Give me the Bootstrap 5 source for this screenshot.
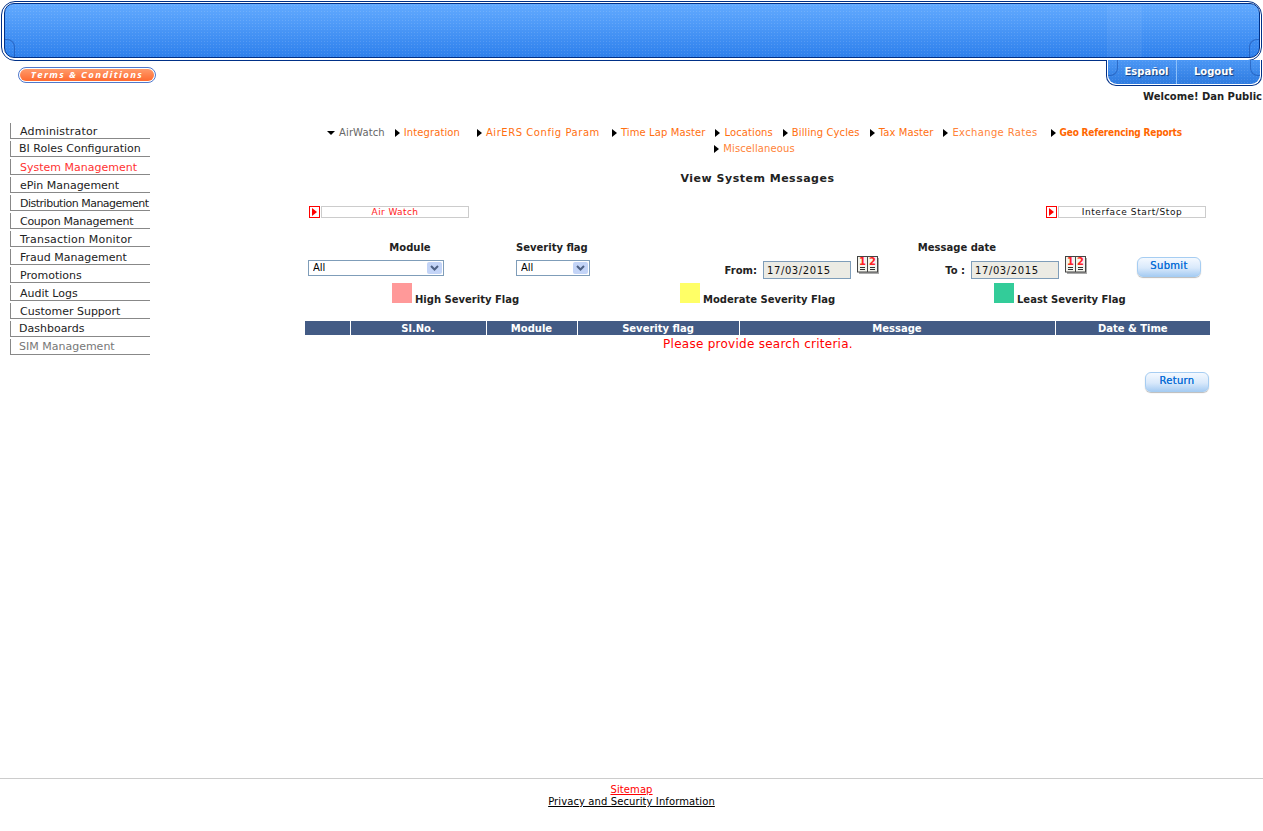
<!DOCTYPE html>
<html lang="en">
<head>
    <meta charset="UTF-8">
    <meta name="viewport" content="width=device-width, initial-scale=1.0">
    <title>View System Messages</title>
    <link rel="stylesheet" href="https://cdn.jsdelivr.net/npm/bootstrap@5.3.0/dist/css/bootstrap.min.css">
    <style>
        body { font-family: "DejaVu Sans", Verdana, sans-serif; font-size: 10px; line-height: 12px; color: #222; background: #fff; }
        a { text-decoration: none; }

        .banner-outer { margin: 1px 1px 0 1px; height: 60px; border: 1px solid #003087; border-radius: 14px; padding: 1px 1px 2px 2px; background: #fff; position: relative; z-index: 1; }
        .banner-inner { height: 100%; border: 1px solid #003087; border-radius: 10px; position: relative; overflow: hidden;
            background: radial-gradient(circle, rgba(255,255,255,.12) 1px, transparent 1px) 0 0 / 3px 3px, linear-gradient(#62aaff, #2e80ec); }
        .banner-inner::before, .banner-inner::after { content: ""; position: absolute; bottom: 0; width: 10px; height: 18px; border: 1px solid rgba(20,70,160,.5); border-bottom: 0; }
        .banner-inner::before { left: 0; border-left: 0; border-top-right-radius: 8px; }
        .banner-inner::after { right: 0; border-right: 0; border-top-left-radius: 8px; }
        .banner-mark { position: absolute; right: 117px; top: 2px; bottom: 0; width: 35px; background: rgba(255,255,255,.05); }

        .top-strip { height: 25px; margin-top: -1px; }
        .terms-btn { margin: 7px 0 0 18px; width: 138px; height: 16px; border: 1px solid #4f78cc; border-radius: 8px; background: #fff; padding: 1px; }
        .terms-btn span { display: block; height: 100%; border-radius: 6px; background: linear-gradient(#ff9a6a, #ff6a30); color: #fff; font-size: 9.5px; line-height: 12px; font-style: italic; font-weight: bold; letter-spacing: 1.4px; text-align: center; font-family: "Open Sans", sans-serif; }
        .lang-tabs { width: 156px; height: 26px; margin-right: 1px; border: 1px solid #003087; border-top: 0; border-radius: 0 0 10px 10px; padding: 0 1px 1px 1px; background: #fff; position: relative; z-index: 2; }
        .lang-tabs::before, .lang-tabs::after { content: ""; position: absolute; top: 0; width: 10px; height: 16px; border: 1px solid rgba(20,70,160,.5); border-top: 0; }
        .lang-tabs::before { left: 1px; border-left: 0; border-bottom-right-radius: 8px; }
        .lang-tabs::after { right: 1px; border-right: 0; border-bottom-left-radius: 8px; }
        .lang-tabs a { display: block; text-align: center; color: #fff; font-weight: bold; font-size: 10px; line-height: 21px; padding-top: 1px; text-shadow: 1px 1px 1px #123a78;
            background: radial-gradient(circle, rgba(255,255,255,.1) 1px, transparent 1px) 0 0 / 3px 3px, linear-gradient(#4b97f5, #2e7be0); }
        .lang-tabs a:first-child { flex: none; width: 69px; padding-left: 9px; border-right: 1px solid #8cc0fa; border-radius: 0 0 0 9px; }
        .lang-tabs a:last-child { flex: 1; padding-right: 10px; border-radius: 0 0 9px 0; }
        .welcome { margin-top: 6px; height: 12px; font-weight: bold; font-size: 10px; text-align: right; padding-right: 1px; white-space: nowrap; }

        .side-menu { width: 140px; margin: 18px 0 0 10px; flex: none; }
        .side-menu a { display: block; height: 16px; margin-top: 2px; border-left: 1px solid #888; border-bottom: 1px solid #888; padding: 2px 0 0 9px; color: #222; font-size: 11px; line-height: 14px; white-space: nowrap; overflow: hidden; }
        .side-menu a.on { color: #f33; }
        .side-menu a.off { color: #777; }
        .side-menu a.up { padding-top: 1px; padding-left: 8px; }
        .side-menu a.tight { letter-spacing: -.28px; }
        .side-menu a.tighter { letter-spacing: -.5px; }
        .side-menu a.roomy { letter-spacing: .2px; }

        .main-area { width: 905px; margin: 24px 0 0 155px; flex: none; }
        .sub-nav { column-gap: 10px; row-gap: 4px; height: 28px; padding-left: 16px; padding-right: 22px; }
        .sub-nav a { color: #ff6f10; font-size: 10px; line-height: 12px; display: flex; align-items: center; gap: 3px; white-space: nowrap; letter-spacing: .1px; }
        .sub-nav a.cur { color: #666; gap: 4px; }
        .sub-nav a.geo { color: #f60; font-weight: bold; font-family: "DejaVu Sans Condensed", "DejaVu Sans", sans-serif; font-stretch: condensed; letter-spacing: -.2px; }
        .sub-nav a.pale { color: #ff8338; }
        .sub-nav a.gap-after { margin-right: 7px; }
        .sub-nav a.ls-wide { letter-spacing: .55px; margin-right: 2px; }
        .sub-nav a.ls-mid { letter-spacing: .35px; margin-right: 3px; }
        .tri-r { width: 0; height: 0; border-left: 5px solid #000; border-top: 4px solid transparent; border-bottom: 4px solid transparent; margin-right: 1px; }
        .tri-d { width: 0; height: 0; border-top: 4px solid #000; border-left: 4px solid transparent; border-right: 4px solid transparent; }
        .page-title { font-weight: bold; font-size: 11px; text-align: center; margin: 17px 0 0 0; line-height: 14px; height: 14px; letter-spacing: .5px; }

        .tool-row { margin: 20px 0 0 4px; width: 897px; }
        .tool-item { width: 160px; height: 12px; }
        .red-box { width: 11px; height: 12px; border: 1px solid #f00; flex: none; position: relative; }
        .red-box::after { content: ""; position: absolute; left: 2px; top: 1px; border-left: 5px solid #f00; border-top: 4px solid transparent; border-bottom: 4px solid transparent; }
        .tool-label { flex: 1; margin-left: 1px; border: 1px solid #ccc; font-size: 9px; line-height: 10px; text-align: center; color: #111; letter-spacing: .6px; }
        .tool-label.red { color: #f22; letter-spacing: .4px; }

        .filter-grid { display: grid; grid-template-columns: 208px 141px 222px 208px 50px 64px; margin: 24px 0 0 3px; height: 41px; }
        .f-label { font-weight: bold; font-size: 10px; line-height: 12px; }
        .module-label { padding-right: 4px; }
        .date-label { padding-right: 52px; }
        .f-select { display: block; appearance: none; border: 1px solid #7f9db9; border-radius: 0; height: 16px; padding: 0 0 0 4px; font-family: "DejaVu Sans", sans-serif; font-size: 10px; line-height: 14px; color: #000; margin-top: 6px;
            background: #fff url("data:image/svg+xml,%3Csvg xmlns='http://www.w3.org/2000/svg' width='15' height='12'%3E%3Crect width='15' height='12' rx='2' fill='%23c3d4f7'/%3E%3Cpath d='M4 4l3.5 3.5L11 4' fill='none' stroke='%234d6185' stroke-width='2'/%3E%3C/svg%3E") no-repeat right 1px center; }
        .select-module { width: 136px; }
        .select-flag { width: 74px; }
        .date-pad { padding-top: 12px; }
        .date-word { font-size: 10px; line-height: 12px; margin-top: 11px; white-space: nowrap; }
        .date-box { width: 88px; height: 18px; border: 1px solid #7f9db9; background: #ecebe4; color: #111; font-family: "DejaVu Sans", sans-serif; font-size: 10px; line-height: 16px; padding: 0 3px; margin: 7px 0 0 6px; letter-spacing: .6px; border-radius: 0; }
        .cal-icon { margin: 2px 0 0 6px; flex: none; }
        .cal-digit { font-family: "DejaVu Sans", sans-serif; font-size: 10px; font-weight: bold; fill: #f22; }

        .blue-btn { display: block; width: 64px; height: 20px; padding: 0 0 3px 0; border: 1px solid #a6cdf2; border-radius: 6px; background: linear-gradient(#f4f9ff 0, #d9e9fb 55%, #a8cdf3 100%); color: #0f6fd6; font-size: 10px; line-height: 15px; font-weight: normal; box-shadow: 0 1px 1px #bbb; letter-spacing: .3px; text-shadow: 0 0 .5px #0f6fd6; }
        .submit-btn { margin-top: 15px; }
        .legend-row { height: 20px; padding-left: 87px; font-weight: bold; font-size: 10px; }
        .legend-item { display: flex; align-items: flex-end; gap: 3px; white-space: nowrap; line-height: 12px; }
        .legend-item span + span { margin-bottom: -3px; }
        .swatch { width: 20px; height: 20px; display: block; }
        .swatch-high { background: #ff9999; }
        .swatch-mid { background: #ffff66; }
        .swatch-low { background: #33cc99; }
        .legend-high { width: 288px; }
        .legend-mid { width: 314px; }

        .msg-table { width: 905px; margin: 18px 0 0 0; table-layout: fixed; border-collapse: collapse; }
        .msg-table th { background: #435b85; color: #fff; font-size: 10px; line-height: 13px; height: 14px; padding: 1px 0 0 0; text-align: center; border-left: 1px solid #fff; font-weight: bold; }
        .msg-table th:first-child { border-left: 0; }
        .msg-table td { color: #f00; font-size: 12px; line-height: 18px; padding: 0 0 0 1px; text-align: center; letter-spacing: .26px; }
        .c-a { width: 45px; } .c-b { width: 136px; } .c-c { width: 91px; } .c-d { width: 162px; } .c-e { width: 316px; } .c-f { width: 155px; }
        .return-row { margin-top: 19px; padding-right: 1px; }

        .foot-area { border-top: 1px solid #ccc; height: 53px; padding-top: 5px; text-align: center; font-size: 10px; line-height: 12px; letter-spacing: .1px; }
        .foot-area a { display: block; }
        .foot-area a span { text-decoration: underline; }
        .foot-area .red-link { color: #f00; }
        .foot-area .black-link { color: #000; }
    </style>
</head>
<body class="d-flex flex-column vh-100 overflow-hidden">

<div class="banner-outer">
    <div class="banner-inner"><div class="banner-mark"></div></div>
</div>

<div class="top-strip d-flex justify-content-between align-items-start">
    <div class="terms-btn"><span>Terms &amp; Conditions</span></div>
    <div class="lang-tabs d-flex">
        <a href="#">Español</a>
        <a href="#">Logout</a>
    </div>
</div>
<div class="welcome">Welcome! Dan Public</div>

<div class="d-flex align-items-start">
    <div class="side-menu">
        <a href="#" class="roomy">Administrator</a>
        <a href="#" class="up">BI Roles Configuration</a>
        <a href="#" class="on">System Management</a>
        <a href="#">ePin Management</a>
        <a href="#" class="tighter">Distribution Management</a>
        <a href="#" class="tight">Coupon Management</a>
        <a href="#" class="roomy">Transaction Monitor</a>
        <a href="#">Fraud Management</a>
        <a href="#">Promotions</a>
        <a href="#">Audit Logs</a>
        <a href="#">Customer Support</a>
        <a href="#" class="up">Dashboards</a>
        <a href="#" class="off up">SIM Management</a>
    </div>

    <div class="main-area">
        <div class="sub-nav d-flex flex-wrap justify-content-center">
            <a href="#" class="cur"><i class="tri-d"></i>AirWatch</a>
            <a href="#" class="gap-after"><i class="tri-r"></i>Integration</a>
            <a href="#" class="ls-wide"><i class="tri-r"></i>AirERS Config Param</a>
            <a href="#"><i class="tri-r"></i>Time Lap Master</a>
            <a href="#"><i class="tri-r"></i>Locations</a>
            <a href="#"><i class="tri-r"></i>Billing Cycles</a>
            <a href="#"><i class="tri-r"></i>Tax Master</a>
            <a href="#" class="pale ls-mid"><i class="tri-r"></i>Exchange Rates</a>
            <a href="#" class="geo"><i class="tri-r"></i>Geo Referencing Reports</a>
            <a href="#" class="pale"><i class="tri-r"></i>Miscellaneous</a>
        </div>

        <div class="page-title">View System Messages</div>

        <div class="tool-row d-flex justify-content-between">
            <div class="tool-item d-flex"><span class="red-box"></span><span class="tool-label red">Air Watch</span></div>
            <div class="tool-item d-flex"><span class="red-box"></span><span class="tool-label">Interface Start/Stop</span></div>
        </div>

        <div class="filter-grid">
            <div>
                <div class="f-label module-label text-center">Module</div>
                <select class="f-select select-module"><option>All</option></select>
            </div>
            <div>
                <div class="f-label">Severity flag</div>
                <select class="f-select select-flag"><option>All</option></select>
            </div>
            <div class="date-pad d-flex justify-content-end align-items-start">
                <b class="date-word">From:</b>
                <input class="date-box" value="17/03/2015">
                <svg class="cal-icon" width="22" height="18" viewBox="0 0 22 18"><rect x="2" y="2" width="20" height="16" fill="#aaa"/><rect x=".5" y=".5" width="20" height="15.5" fill="#f4f4ee" stroke="#444"/><path d="M10.5 1v15" stroke="#444"/><text class="cal-digit" x="2" y="9">1</text><text class="cal-digit" x="12" y="9">2</text><path d="M3 11.5h5M3 13.5h5M13 11.5h5M13 13.5h5" stroke="#333"/></svg>
            </div>
            <div>
                <div class="f-label date-label text-center">Message date</div>
                <div class="d-flex justify-content-end align-items-start">
                    <b class="date-word">To :</b>
                    <input class="date-box" value="17/03/2015">
                    <svg class="cal-icon" width="22" height="18" viewBox="0 0 22 18"><rect x="2" y="2" width="20" height="16" fill="#aaa"/><rect x=".5" y=".5" width="20" height="15.5" fill="#f4f4ee" stroke="#444"/><path d="M10.5 1v15" stroke="#444"/><text class="cal-digit" x="2" y="9">1</text><text class="cal-digit" x="12" y="9">2</text><path d="M3 11.5h5M3 13.5h5M13 11.5h5M13 13.5h5" stroke="#333"/></svg>
                </div>
            </div>
            <div></div>
            <div><button class="btn blue-btn submit-btn" type="button">Submit</button></div>
        </div>

        <div class="legend-row d-flex">
            <div class="legend-item legend-high"><span class="swatch swatch-high"></span><span>High Severity Flag</span></div>
            <div class="legend-item legend-mid"><span class="swatch swatch-mid"></span><span>Moderate Severity Flag</span></div>
            <div class="legend-item"><span class="swatch swatch-low"></span><span>Least Severity Flag</span></div>
        </div>

        <table class="msg-table">
            <colgroup>
                <col class="c-a"><col class="c-b"><col class="c-c"><col class="c-d"><col class="c-e"><col class="c-f">
            </colgroup>
            <thead>
                <tr><th></th><th>Sl.No.</th><th>Module</th><th>Severity flag</th><th>Message</th><th>Date &amp; Time</th></tr>
            </thead>
            <tbody>
                <tr><td colspan="6">Please provide search criteria.</td></tr>
            </tbody>
        </table>

        <div class="return-row d-flex justify-content-end">
            <button class="btn blue-btn" type="button">Return</button>
        </div>
    </div>
</div>

<div class="foot-area mt-auto">
    <a href="#" class="red-link"><span>Sitemap</span></a>
    <a href="#" class="black-link"><span>Privacy and Security Information</span></a>
</div>

<script src="https://cdn.jsdelivr.net/npm/bootstrap@5.3.0/dist/js/bootstrap.bundle.min.js"></script>
</body>
</html>
